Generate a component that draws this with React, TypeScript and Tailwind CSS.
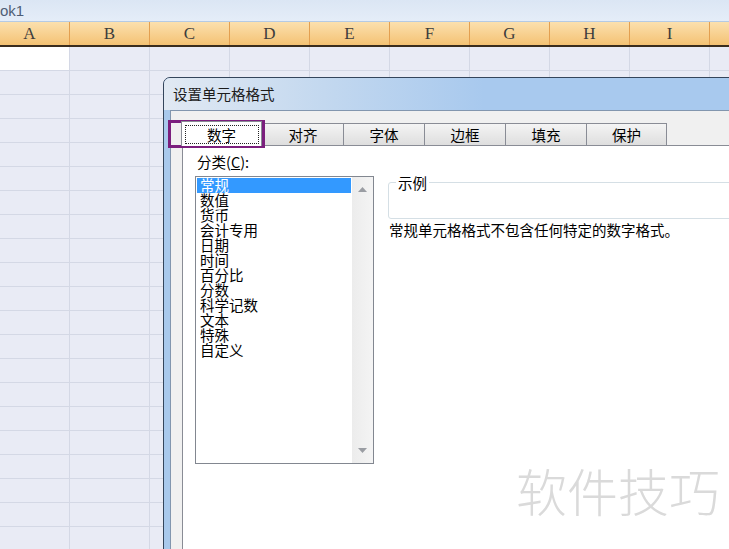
import React from "react";

const cols = ["A", "B", "C", "D", "E", "F", "G", "H", "I", "J"];
const rows = Array.from({ length: 22 }, (_, i) => i);
const tabs = ["对齐", "字体", "边框", "填充", "保护"];
const categories = ["常规", "数值", "货币", "会计专用", "日期", "时间", "百分比", "分数", "科学记数", "文本", "特殊", "自定义"];

const cjk = { fontFamily: '"Noto Sans CJK SC", "Liberation Sans", sans-serif' };

function Sheet() {
  return (
    <div className="flex flex-col">
      <div className="h-[22px] border-b border-[#b5cae3] bg-gradient-to-b from-[#dbe6f4] to-[#e5edf8] text-[15px] leading-[21px] text-[#4f5e75]" style={{ fontFamily: '"Liberation Sans", sans-serif' }}>
        ok1
      </div>
      <div className="-ml-[10px] flex h-[25px] border-b-2 border-[#3a2d1e] bg-gradient-to-b from-[#fbe0ae] to-[#f4c273]">
        {cols.map((c) => (
          <div
            key={c}
            className="flex w-[80px] shrink-0 items-center justify-center border-r border-[#e39f50] pt-[1px] text-[17px] text-[#3d3d3d]"
            style={{ fontFamily: '"Liberation Serif", serif' }}
          >
            {c}
          </div>
        ))}
      </div>
      {rows.map((r) => (
        <div key={r} className="-ml-[10px] flex h-[24px]">
          {cols.map((c, i) => (
            <div
              key={c}
              className={
                "h-full w-[80px] shrink-0 border-r border-b border-[#d4d8e5] " +
                (r === 0 && i === 0 ? "bg-white" : "bg-[#e9ebf5]")
              }
            />
          ))}
        </div>
      ))}
    </div>
  );
}

function Arrow({ up }: { up?: boolean }) {
  return (
    <svg width="9" height="5" viewBox="0 0 9 5">
      <path d={up ? "M0 5 L4.5 0 L9 5 Z" : "M0 0 L4.5 5 L9 0 Z"} fill="#9a9da3" />
    </svg>
  );
}

function FormatDialog() {
  return (
    <div className="absolute left-[163px] top-[77px] flex h-[520px] w-[620px] flex-col rounded-tl-[7px] border border-[#34455b] bg-[#a9c9ec]" style={cjk}>
      <div className="flex h-[32px] shrink-0 items-center rounded-tl-[6px] bg-[linear-gradient(90deg,#e1e9f3_0px,#c3d8ef_160px,#a8c9ee_320px)] pl-[9px] text-[14.5px] text-[#1c1c1c]">
        设置单元格格式
      </div>
      <div className="ml-[6px] flex-1 overflow-hidden border border-[#8296ae] bg-[#f0f0f0] pl-[11px] pt-[10px]">
        <div className="flex h-[24px] items-end">
          <div className="relative z-10 -mb-px -ml-px flex h-[25px] w-[81px] items-center justify-center border border-b-0 border-[#898c95] bg-white">
            <div className="flex h-[19px] w-[74px] items-center justify-center border border-dotted border-[#222] text-[14.5px] leading-[15px] text-black">
              数字
            </div>
          </div>
          {tabs.map((t, i) => (
            <div
              key={t}
              className={
                "flex h-[22px] w-[81px] items-center justify-center border-t border-l border-[#898c95] bg-gradient-to-b from-[#f4f4f4] to-[#dedede] text-[14.5px] leading-[15px] text-black " +
                (i === tabs.length - 1 ? "border-r" : "")
              }
            >
              {t}
            </div>
          ))}
        </div>
        <div className="h-[440px] border border-[#898c95] bg-white pl-[12px] pt-[8px]">
          <div className="pl-[2px] text-[14.5px] leading-[15px] text-black">
            分类(<span className="underline">C</span>):
          </div>
          <div className="mt-[7px] flex">
            <div className="flex h-[288px] w-[179px] shrink-0 border border-[#828790]">
              <div className="w-[156px] p-px">
                {categories.map((c, i) => (
                  <div
                    key={c}
                    className={
                      "h-[15px] pl-[3px] text-[14.5px] leading-[13px] " +
                      (i === 0 ? "bg-[#3399ff] text-white" : "text-black")
                    }
                  >
                    {c}
                  </div>
                ))}
              </div>
              <div className="flex w-[21px] flex-col items-center justify-between bg-gradient-to-r from-[#ececec] to-[#f4f4f4] py-[10px]">
                <Arrow up />
                <Arrow />
              </div>
            </div>
            <div className="ml-[14px] flex-1">
              <div className="relative mt-[6px] h-[37px] rounded-[3px] border border-[#d5dfe5]">
                <span className="absolute -top-[8px] left-[7px] bg-white px-[2px] text-[14.5px] leading-[15px] text-black">示例</span>
              </div>
              <div className="mt-[3px] pl-px text-[14.5px] leading-[15px] text-black">
                常规单元格格式不包含任何特定的数字格式。
              </div>
            </div>
          </div>
        </div>
      </div>
    </div>
  );
}

export default function App() {
  return (
    <div className="relative h-[549px] w-[729px] overflow-hidden bg-[#e9ebf5]">
      <Sheet />
      <FormatDialog />
      <div className="absolute left-[168px] top-[120px] h-[28px] w-[97px] border-[3px] border-[#7b1f7d]" />
      <div className="absolute left-[516px] top-[465px] text-[51px] font-light leading-none text-[#dadada]" style={cjk}>
        软件技巧
      </div>
    </div>
  );
}
